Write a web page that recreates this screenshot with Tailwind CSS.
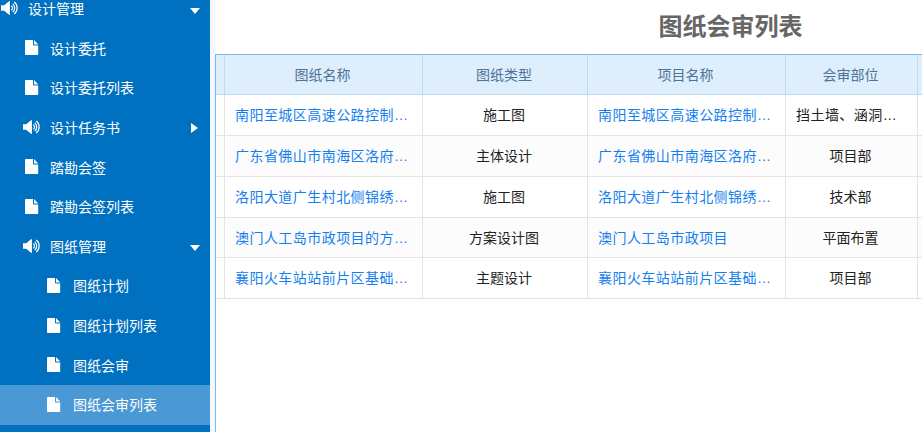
<!DOCTYPE html>
<html lang="zh-CN">
<head>
<meta charset="utf-8">
<script src="https://cdn.jsdelivr.net/npm/@tailwindcss/browser@4"></script>
</head>
<body class="m-0 h-[432px] w-[922px] overflow-hidden bg-white font-['Liberation_Sans','Noto_Sans_CJK_SC',sans-serif]">
<svg class="hidden">
  <symbol id="spk" viewBox="0 0 17 14">
    <path fill="#fff" d="M0 4.200h3.200L8 .2c.4-.3.900-.1.900.4v12.800c0 .5-.5.7-.9.4L3.200 9.800H0z"/>
    <path fill="none" stroke="#fff" stroke-width="1.200" d="M10.300 4.800a2.600 2.600 0 0 1 0 4.400M11.700 3a5 5 0 0 1 0 8M13.200 1a7.600 7.600 0 0 1 0 12"/>
  </symbol>
  <symbol id="doc" viewBox="0 0 14 15">
    <path fill="#fff" d="M.8 0H8v4.500c0 .6.400 1 1 1h4.200v8.700c0 .5-.3.8-.8.800H.8c-.5 0-.8-.3-.8-.8V.8C0 .3.300 0 .8 0z"/>
    <path fill="#fff" d="M9 0l4.200 4.400H9z"/>
  </symbol>
</svg>
<div class="flex h-[432px] w-[922px]">
  <aside class="h-[432px] w-[210px] shrink-0 overflow-hidden bg-[#0070c0] text-sm text-white">
    <div class="-mt-[10.500px]">
      <div class="relative flex h-[39.600px] items-center pb-[2px] pl-[1px]"><svg class="h-[14px] w-[17px]"><use href="#spk"/></svg><span class="ml-[10px] pt-[2px]">设计管理</span><span class="absolute left-[190px] top-[18px] h-0 w-0 border-x-[5px] border-t-[6px] border-x-transparent border-t-white"></span></div>
      <div class="flex h-[39.600px] items-center pb-[2px] pl-[25px]"><svg class="h-[15px] w-[14px]"><use href="#doc"/></svg><span class="ml-[11px] pt-[2px]">设计委托</span></div>
      <div class="flex h-[39.600px] items-center pb-[2px] pl-[25px]"><svg class="h-[15px] w-[14px]"><use href="#doc"/></svg><span class="ml-[11px] pt-[2px]">设计委托列表</span></div>
      <div class="relative flex h-[39.600px] items-center pb-[2px] pl-[23px]"><svg class="h-[14px] w-[17px]"><use href="#spk"/></svg><span class="ml-[10px] pt-[2px]">设计任务书</span><span class="absolute left-[191px] top-[15px] h-0 w-0 border-y-[5px] border-l-[7px] border-y-transparent border-l-white"></span></div>
      <div class="flex h-[39.600px] items-center pb-[2px] pl-[25px]"><svg class="h-[15px] w-[14px]"><use href="#doc"/></svg><span class="ml-[11px] pt-[2px]">踏勘会签</span></div>
      <div class="flex h-[39.600px] items-center pb-[2px] pl-[25px]"><svg class="h-[15px] w-[14px]"><use href="#doc"/></svg><span class="ml-[11px] pt-[2px]">踏勘会签列表</span></div>
      <div class="relative flex h-[39.600px] items-center pb-[2px] pl-[23px]"><svg class="h-[14px] w-[17px]"><use href="#spk"/></svg><span class="ml-[10px] pt-[2px]">图纸管理</span><span class="absolute left-[190px] top-[18px] h-0 w-0 border-x-[5px] border-t-[6px] border-x-transparent border-t-white"></span></div>
      <div class="flex h-[39.600px] items-center pb-[2px] pl-[47px]"><svg class="h-[15px] w-[14px]"><use href="#doc"/></svg><span class="ml-[12px] pt-[2px]">图纸计划</span></div>
      <div class="flex h-[39.600px] items-center pb-[2px] pl-[47px]"><svg class="h-[15px] w-[14px]"><use href="#doc"/></svg><span class="ml-[12px] pt-[2px]">图纸计划列表</span></div>
      <div class="flex h-[39.600px] items-center pb-[2px] pl-[47px]"><svg class="h-[15px] w-[14px]"><use href="#doc"/></svg><span class="ml-[12px] pt-[2px]">图纸会审</span></div>
      <div class="flex h-[39.600px] items-center bg-[#4a98d4] pb-[2px] pl-[47px]"><svg class="h-[15px] w-[14px]"><use href="#doc"/></svg><span class="ml-[12px] pt-[2px]">图纸会审列表</span></div>
    </div>
  </aside>
  <div class="w-[5px] shrink-0 bg-[#f3f8ff]"></div>
  <main class="min-w-0 flex-1 overflow-hidden">
    <h1 class="h-[54px] w-[1031px] pt-[8px] text-center text-2xl leading-[38px] font-bold text-[#666]">图纸会审列表</h1>
    <div class="h-[378px] w-[720px] border-t border-l border-[#7ab8e8]">
      <table class="w-[720px] table-fixed border-separate border-spacing-0 text-sm text-[#222]">
        <colgroup><col class="w-[9px]"><col class="w-[198px]"><col class="w-[165px]"><col class="w-[198px]"><col class="w-[132px]"><col></colgroup>
        <thead>
          <tr class="h-[40px] bg-[#deeefc] font-normal text-[#4d7397]">
            <th class="border-r border-b border-[#bfd9ef]"></th>
            <th class="border-r border-b border-[#bfd9ef] pr-[2px] font-normal">图纸名称</th>
            <th class="border-r border-b border-[#bfd9ef] pr-[2px] font-normal">图纸类型</th>
            <th class="border-r border-b border-[#bfd9ef] pr-[2px] font-normal">项目名称</th>
            <th class="border-r border-b border-[#bfd9ef] pr-[2px] font-normal">会审部位</th>
            <th class="border-b border-[#bfd9ef]"></th>
          </tr>
        </thead>
        <tbody>
          <tr class="h-[41px]">
            <td class="border-r border-b border-[#e4e4e7]"></td>
            <td class="truncate border-r border-b border-[#e4e4e7] pr-[11px] pl-[10px] tracking-[0.45px] text-[#1480ee]">南阳至城区高速公路控制性工程设计</td>
            <td class="border-r border-b border-[#e4e4e7] pr-[2px] text-center">施工图</td>
            <td class="truncate border-r border-b border-[#e4e4e7] pr-[11px] pl-[10px] tracking-[0.45px] text-[#1480ee]">南阳至城区高速公路控制性工程</td>
            <td class="truncate border-r border-b border-[#e4e4e7] pr-[11px] pl-[10px] tracking-[0.45px]">挡土墙、涵洞及排水工程</td>
            <td class="border-b border-[#e4e4e7]"></td>
          </tr>
          <tr class="h-[41px] bg-[#fdfcfd]">
            <td class="border-r border-b border-[#e4e4e7]"></td>
            <td class="truncate border-r border-b border-[#e4e4e7] pr-[11px] pl-[10px] tracking-[0.45px] text-[#1480ee]">广东省佛山市南海区洛府大道设计项目</td>
            <td class="border-r border-b border-[#e4e4e7] pr-[2px] text-center">主体设计</td>
            <td class="truncate border-r border-b border-[#e4e4e7] pr-[11px] pl-[10px] tracking-[0.45px] text-[#1480ee]">广东省佛山市南海区洛府大道项目</td>
            <td class="border-r border-b border-[#e4e4e7] pr-[2px] text-center">项目部</td>
            <td class="border-b border-[#e4e4e7]"></td>
          </tr>
          <tr class="h-[41px]">
            <td class="border-r border-b border-[#e4e4e7]"></td>
            <td class="truncate border-r border-b border-[#e4e4e7] pr-[11px] pl-[10px] tracking-[0.45px] text-[#1480ee]">洛阳大道广生村北侧锦绣花园项目</td>
            <td class="border-r border-b border-[#e4e4e7] pr-[2px] text-center">施工图</td>
            <td class="truncate border-r border-b border-[#e4e4e7] pr-[11px] pl-[10px] tracking-[0.45px] text-[#1480ee]">洛阳大道广生村北侧锦绣花园项目</td>
            <td class="border-r border-b border-[#e4e4e7] pr-[2px] text-center">技术部</td>
            <td class="border-b border-[#e4e4e7]"></td>
          </tr>
          <tr class="h-[40px] bg-[#fdfcfd]">
            <td class="border-r border-b border-[#e4e4e7]"></td>
            <td class="truncate border-r border-b border-[#e4e4e7] pr-[11px] pl-[10px] tracking-[0.45px] text-[#1480ee]">澳门人工岛市政项目的方案设计图纸</td>
            <td class="border-r border-b border-[#e4e4e7] pr-[2px] text-center">方案设计图</td>
            <td class="truncate border-r border-b border-[#e4e4e7] pr-[11px] pl-[10px] tracking-[0.45px] text-[#1480ee]">澳门人工岛市政项目</td>
            <td class="border-r border-b border-[#e4e4e7] pr-[2px] text-center">平面布置</td>
            <td class="border-b border-[#e4e4e7]"></td>
          </tr>
          <tr class="h-[41px]">
            <td class="border-r border-b border-[#e4e4e7]"></td>
            <td class="truncate border-r border-b border-[#e4e4e7] pr-[11px] pl-[10px] tracking-[0.45px] text-[#1480ee]">襄阳火车站站前片区基础设施项目</td>
            <td class="border-r border-b border-[#e4e4e7] pr-[2px] text-center">主题设计</td>
            <td class="truncate border-r border-b border-[#e4e4e7] pr-[11px] pl-[10px] tracking-[0.45px] text-[#1480ee]">襄阳火车站站前片区基础设施项目</td>
            <td class="border-r border-b border-[#e4e4e7] pr-[2px] text-center">项目部</td>
            <td class="border-b border-[#e4e4e7]"></td>
          </tr>
        </tbody>
      </table>
    </div>
  </main>
</div>
</body>
</html>
